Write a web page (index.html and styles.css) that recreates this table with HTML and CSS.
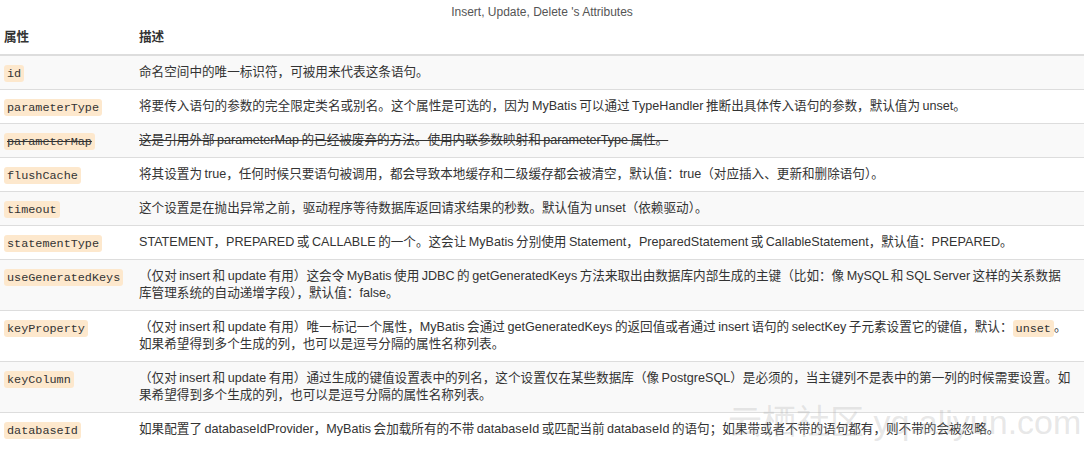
FILE: index.html
```html
<!DOCTYPE html>
<html lang="zh-CN">
<head>
<meta charset="utf-8">
<title>Insert, Update, Delete 's Attributes</title>
<link rel="stylesheet" href="styles.css">
</head>
<body>
<div class="page">
<table class="attrs">
  <caption>Insert, Update, Delete 's Attributes</caption>
  <thead>
    <tr><th class="c-name">属性</th><th>描述</th></tr>
  </thead>
  <tbody>
    <tr><td><code>id</code></td><td>命名空间中的唯一标识符，可被用来代表这条语句。</td></tr>
    <tr><td><code>parameterType</code></td><td>将要传入语句的参数的完全限定类名或别名。这个属性是可选的，因为 MyBatis 可以通过 TypeHandler 推断出具体传入语句的参数，默认值为 unset。</td></tr>
    <tr><td><del><code>parameterMap</code></del></td><td><del>这是引用外部 parameterMap 的已经被废弃的方法。使用内联参数映射和 parameterType 属性。</del></td></tr>
    <tr><td><code>flushCache</code></td><td>将其设置为 true，任何时候只要语句被调用，都会导致本地缓存和二级缓存都会被清空，默认值：true（对应插入、更新和删除语句）。</td></tr>
    <tr><td><code>timeout</code></td><td>这个设置是在抛出异常之前，驱动程序等待数据库返回请求结果的秒数。默认值为 unset（依赖驱动）。</td></tr>
    <tr><td><code>statementType</code></td><td>STATEMENT，PREPARED 或 CALLABLE 的一个。这会让 MyBatis 分别使用 Statement，PreparedStatement 或 CallableStatement，默认值：PREPARED。</td></tr>
    <tr><td><code>useGeneratedKeys</code></td><td>（仅对 insert 和 update 有用）这会令 MyBatis 使用 JDBC 的 getGeneratedKeys 方法来取出由数据库内部生成的主键（比如：像 MySQL 和 SQL Server 这样的关系数据<br>库管理系统的自动递增字段），默认值：false。</td></tr>
    <tr><td><code>keyProperty</code></td><td>（仅对 insert 和 update 有用）唯一标记一个属性，MyBatis 会通过 getGeneratedKeys 的返回值或者通过 insert 语句的 selectKey 子元素设置它的键值，默认：<code>unset</code>。如果希望得到多个生成的列，也可以是逗号分隔的属性名称列表。</td></tr>
    <tr><td><code>keyColumn</code></td><td>（仅对 insert 和 update 有用）通过生成的键值设置表中的列名，这个设置仅在某些数据库（像 PostgreSQL）是必须的，当主键列不是表中的第一列的时候需要设置。如果希望得到多个生成的列，也可以是逗号分隔的属性名称列表。</td></tr>
    <tr><td><code>databaseId</code></td><td>如果配置了 databaseIdProvider，MyBatis 会加载所有的不带 databaseId 或匹配当前 databaseId 的语句；如果带或者不带的语句都有，则不带的会被忽略。</td></tr>
  </tbody>
</table>
<div class="watermark">云栖社区 yq.aliyun.com</div>
</div>
</body>
</html>
```

FILE: styles.css
```css
html, body {
  margin: 0;
  padding: 0;
  background: #fff;
}
body {
  font-family: "Liberation Sans", Arial, "Noto Sans CJK SC", sans-serif;
  font-size: 12.6px;
  line-height: 17px;
  color: #333;
}
.page {
  position: relative;
  width: 1090px;
  height: 449px;
  overflow: hidden;
}
.attrs {
  width: 1084px;
  border-collapse: collapse;
  border-spacing: 0;
}
.attrs caption {
  padding: 4px 0 0;
  font-size: 12px;
  line-height: 17px;
  color: #555;
  text-align: center;
}
.attrs th {
  text-align: left;
  font-weight: bold;
  padding: 8px 4px;
  border-bottom: 2px solid #ddd;
  vertical-align: bottom;
}
.attrs th.c-name {
  width: 127px;
}
.attrs td {
  padding: 8px 4px;
  border-top: 1px solid #ddd;
  vertical-align: top;
  height: 17px;
}
.attrs td + td {
  padding-right: 10px;
  word-spacing: -1px;
}
.attrs tbody tr:nth-child(odd) td {
  background: #f9f9f9;
}
.attrs del {
  text-decoration: line-through;
  color: #333;
}
code {
  font-family: "Liberation Mono", "Courier New", monospace;
  font-size: 11.8px;
  line-height: 1;
  word-spacing: 0;
  padding: 1.5px 3px;
  border-radius: 3px;
  background: #fde8cd;
  color: #333;
}
.watermark {
  position: absolute;
  left: 728px;
  top: 402px;
  font-family: "Liberation Sans", "Noto Sans CJK SC", sans-serif;
  font-size: 34px;
  line-height: 40px;
  color: rgba(175, 175, 175, 0.3);
  white-space: nowrap;
  pointer-events: none;
}
```
